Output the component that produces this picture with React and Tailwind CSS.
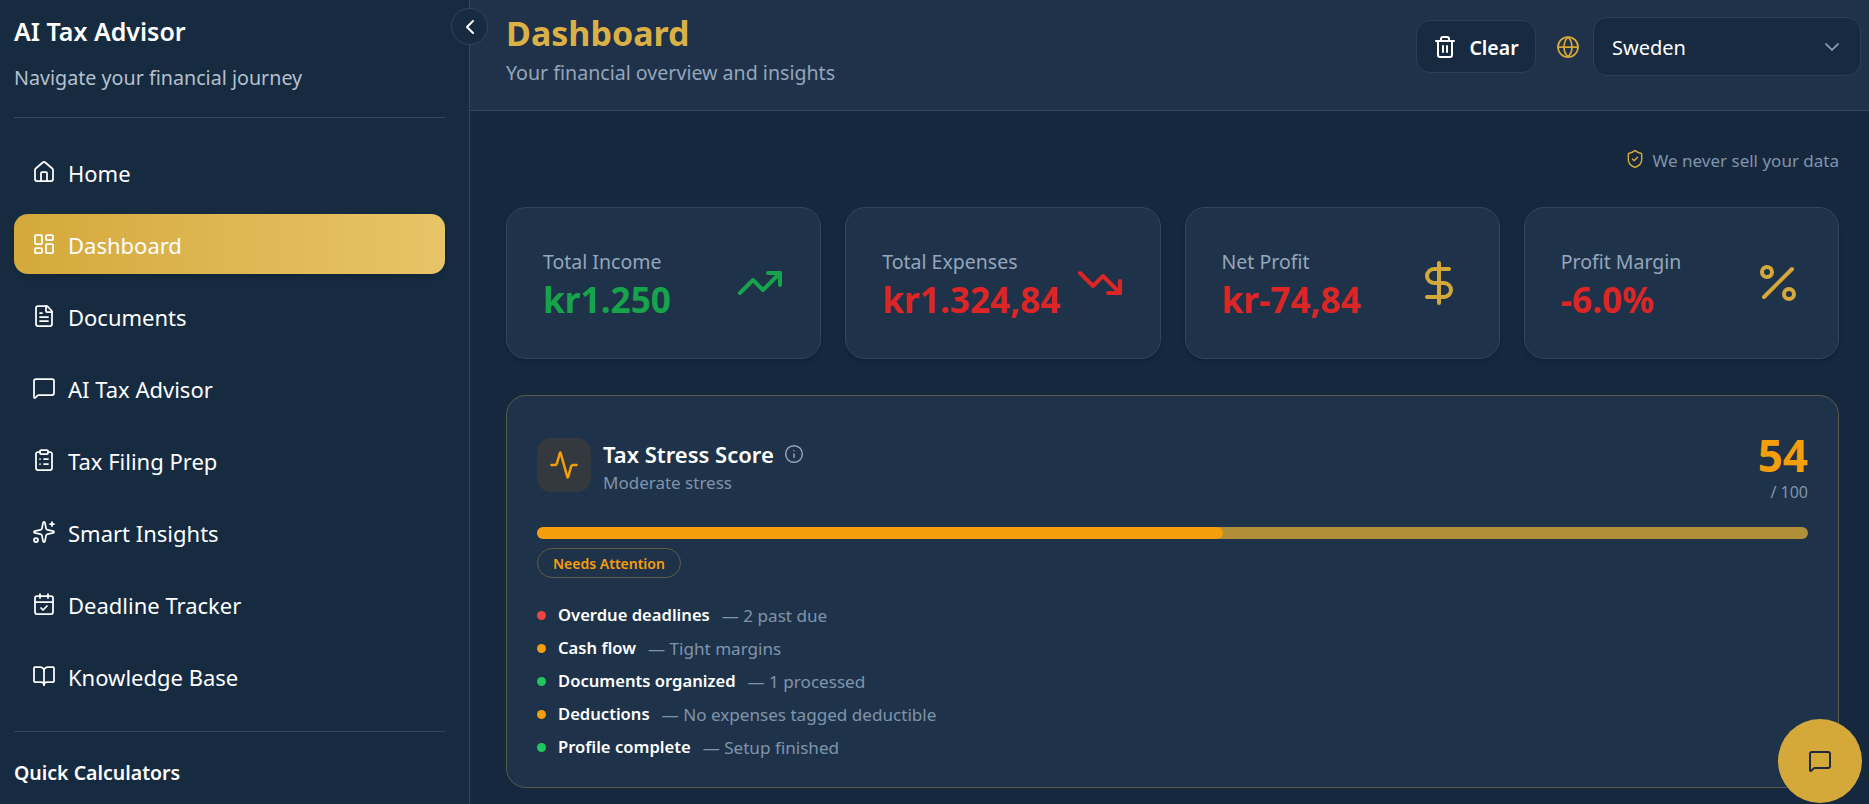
import React from 'react';
import {
  House, LayoutDashboard, FileText, MessageSquare, ClipboardList, Sparkles, CalendarCheck, BookOpen,
  ChevronLeft, ChevronDown, Trash2, Globe, ShieldCheck, TrendingUp, TrendingDown, DollarSign, Percent, Activity, Info,
} from 'lucide-react';

const navItems = [
  { label: 'Home', icon: House },
  { label: 'Dashboard', icon: LayoutDashboard, active: true },
  { label: 'Documents', icon: FileText },
  { label: 'AI Tax Advisor', icon: MessageSquare },
  { label: 'Tax Filing Prep', icon: ClipboardList },
  { label: 'Smart Insights', icon: Sparkles },
  { label: 'Deadline Tracker', icon: CalendarCheck },
  { label: 'Knowledge Base', icon: BookOpen },
];

const stats = [
  { label: 'Total Income', value: 'kr1.250', valueClass: 'text-[#16a34a]', icon: TrendingUp, iconClass: 'text-[#16a34a]' },
  { label: 'Total Expenses', value: 'kr1.324,84', valueClass: 'text-[#dc2626]', icon: TrendingDown, iconClass: 'text-[#dc2626]' },
  { label: 'Net Profit', value: 'kr-74,84', valueClass: 'text-[#dc2626]', icon: DollarSign, iconClass: 'text-[#d4a93a]' },
  { label: 'Profit Margin', value: '-6.0%', valueClass: 'text-[#dc2626]', icon: Percent, iconClass: 'text-[#d4a93a]' },
];

const factors = [
  { label: 'Overdue deadlines', note: '— 2 past due', dot: 'bg-[#ef4444]' },
  { label: 'Cash flow', note: '— Tight margins', dot: 'bg-[#f59e0b]' },
  { label: 'Documents organized', note: '— 1 processed', dot: 'bg-[#22c55e]' },
  { label: 'Deductions', note: '— No expenses tagged deductible', dot: 'bg-[#f59e0b]' },
  { label: 'Profile complete', note: '— Setup finished', dot: 'bg-[#22c55e]' },
];

const Sidebar = () => (
  <aside className="w-[470px] shrink-0 h-full overflow-hidden bg-[#162a40] border-r border-[#2f4560] pl-[14px] pr-[24px]">
    <div className="h-[118px] border-b border-[#34495f] pt-[13px]">
      <h2 className="text-[25px] leading-[36px] font-semibold text-white">AI Tax Advisor</h2>
      <p className="mt-[15px] text-[19.7px] leading-[28px] text-[#b4c0cf]">Navigate your financial journey</p>
    </div>
    <nav className="flex flex-col gap-3 pt-[24px] pb-[25px] border-b border-[#2f4560]">
      {navItems.map(({ label, icon: Icon, active }) => (
        <a
          key={label}
          className={`flex items-center gap-3 h-[60px] pl-[18px] rounded-[14px] text-[22px] text-white ${active ? 'bg-gradient-to-r from-[#d4a93a] to-[#e8c468] shadow-md' : ''}`}
        >
          <Icon size={24} strokeWidth={1.75} className="shrink-0" />
          <span className="pt-[3px]">{label}</span>
        </a>
      ))}
    </nav>
    <h3 className="mt-[27px] text-[19.5px] leading-[28px] font-semibold text-white">Quick Calculators</h3>
  </aside>
);

const Header = () => (
  <header className="h-[111px] shrink-0 flex justify-between bg-[#1f3249] border-b border-[#34495f] pl-[36px] pr-[8px]">
    <div className="pt-[10px]">
      <h1 className="text-[34px] leading-[46px] font-bold text-[#dbb044]">Dashboard</h1>
      <p className="mt-[3px] text-[19.6px] leading-[28px] text-[#94a6bb]">Your financial overview and insights</p>
    </div>
    <div className="flex items-start pt-[17px]">
      <button className="mt-[3px] flex items-center gap-[12px] h-[53px] w-[120px] justify-center rounded-[14px] bg-[#172a40] border border-[#2b3f56] text-[19.5px] font-semibold text-white">
        <Trash2 size={24} strokeWidth={2} />
        <span className="pt-[2px]">Clear</span>
      </button>
      <Globe size={24} strokeWidth={1.75} className="ml-[20px] mt-[18px] text-[#d4a93a]" />
      <div className="ml-[13px] w-[268px] h-[59px] flex items-center justify-between pl-[18px] pr-[16px] rounded-[14px] bg-[#172a40] border border-[#2b3f56] text-[20px] text-white">
        <span className="pt-[2px]">Sweden</span>
        <ChevronDown size={24} strokeWidth={1.75} className="text-[#94a6bb]" />
      </div>
    </div>
  </header>
);

const StatCard = ({ label, value, valueClass, icon: Icon, iconClass }) => (
  <div className="h-[152px] flex items-center justify-between px-[36px] rounded-[20px] bg-[#1e334a] border border-[#30465f] shadow-md">
    <div className="pt-[5px]">
      <p className="text-[19.5px] leading-[24px] text-[#94a6bb]">{label}</p>
      <p className={`mt-[2px] text-[35.2px] leading-[46px] font-bold whitespace-nowrap ${valueClass}`}>{value}</p>
    </div>
    <Icon size={48} strokeWidth={2} className={`shrink-0 ${iconClass}`} />
  </div>
);

const StressCard = () => (
  <section className="mt-[36px] h-[393px] rounded-[20px] bg-[#1e334a] border border-[#5a5a4c] px-[30px] pt-[42px]">
    <div className="h-[77px] flex justify-between">
      <div className="flex gap-3">
        <div className="w-[54px] h-[54px] rounded-[14px] bg-[#33393f] flex items-center justify-center">
          <Activity size={30} strokeWidth={2} className="text-[#f59e0b]" />
        </div>
        <div>
          <div className="flex items-center gap-[10px]">
            <h3 className="text-[22px] leading-[32px] font-semibold text-white">Tax Stress Score</h3>
            <Info size={20} strokeWidth={1.75} className="text-[#94a6bb]" />
          </div>
          <p className="mt-[1px] text-[17px] leading-[24px] text-[#8094ab]">Moderate stress</p>
        </div>
      </div>
      <div className="-mt-[8px] text-right">
        <p className="text-[44px] leading-[50px] font-bold text-[#f59e0b]">54</p>
        <p className="mt-[2px] text-[16px] leading-[20px] text-[#8094ab]">/ 100</p>
      </div>
    </div>
    <div className="mt-[12px] h-[12px] rounded-full bg-[#b08f38] overflow-hidden">
      <div className="h-full bg-[#f59e0b] rounded-full" style={{ width: '54%' }} />
    </div>
    <span className="mt-[9px] inline-flex items-center h-[30px] px-[15px] rounded-full border border-[#5d5c49] text-[14px] font-semibold text-[#f59e0b]">
      Needs Attention
    </span>
    <ul className="mt-[21px] flex flex-col">
      {factors.map((f) => (
        <li key={f.label} className="flex items-center h-[33px]">
          <span className={`w-[9px] h-[9px] rounded-full mr-3 ${f.dot}`} />
          <span className="text-[16.6px] font-semibold text-white">{f.label}</span>
          <span className="ml-3 text-[17.1px] text-[#8094ab]">{f.note}</span>
        </li>
      ))}
    </ul>
  </section>
);

export default function App() {
  return (
    <div className="relative flex h-screen overflow-hidden bg-[#15283e] font-['Noto_Sans',sans-serif]">
      <Sidebar />
      <div className="flex-1 min-w-0 flex flex-col">
        <Header />
        <main className="flex-1 overflow-hidden pl-[36px] pr-[30px]">
          <div className="h-[96px] flex items-start justify-end pt-[38px] gap-2">
            <ShieldCheck size={20} strokeWidth={1.75} className="text-[#d4a93a]" />
            <span className="text-[17px] leading-[24px] text-[#8094ab]">We never sell your data</span>
          </div>
          <div className="grid grid-cols-4 gap-6">
            {stats.map((s) => <StatCard key={s.label} {...s} />)}
          </div>
          <StressCard />
        </main>
      </div>
      {/* collapse button sits on the sidebar edge */}
      <button className="absolute left-[451px] top-[8px] w-[37px] h-[37px] rounded-full bg-[#162a40] border border-[#2f4560] flex items-center justify-center text-white">
        <ChevronLeft size={24} strokeWidth={2} />
      </button>
      <button className="absolute left-[1778px] top-[719px] w-[84px] h-[84px] rounded-full bg-[#d4a93a] flex items-center justify-center text-[#1c2b3c]">
        <MessageSquare size={24} strokeWidth={2} />
      </button>
    </div>
  );
}
